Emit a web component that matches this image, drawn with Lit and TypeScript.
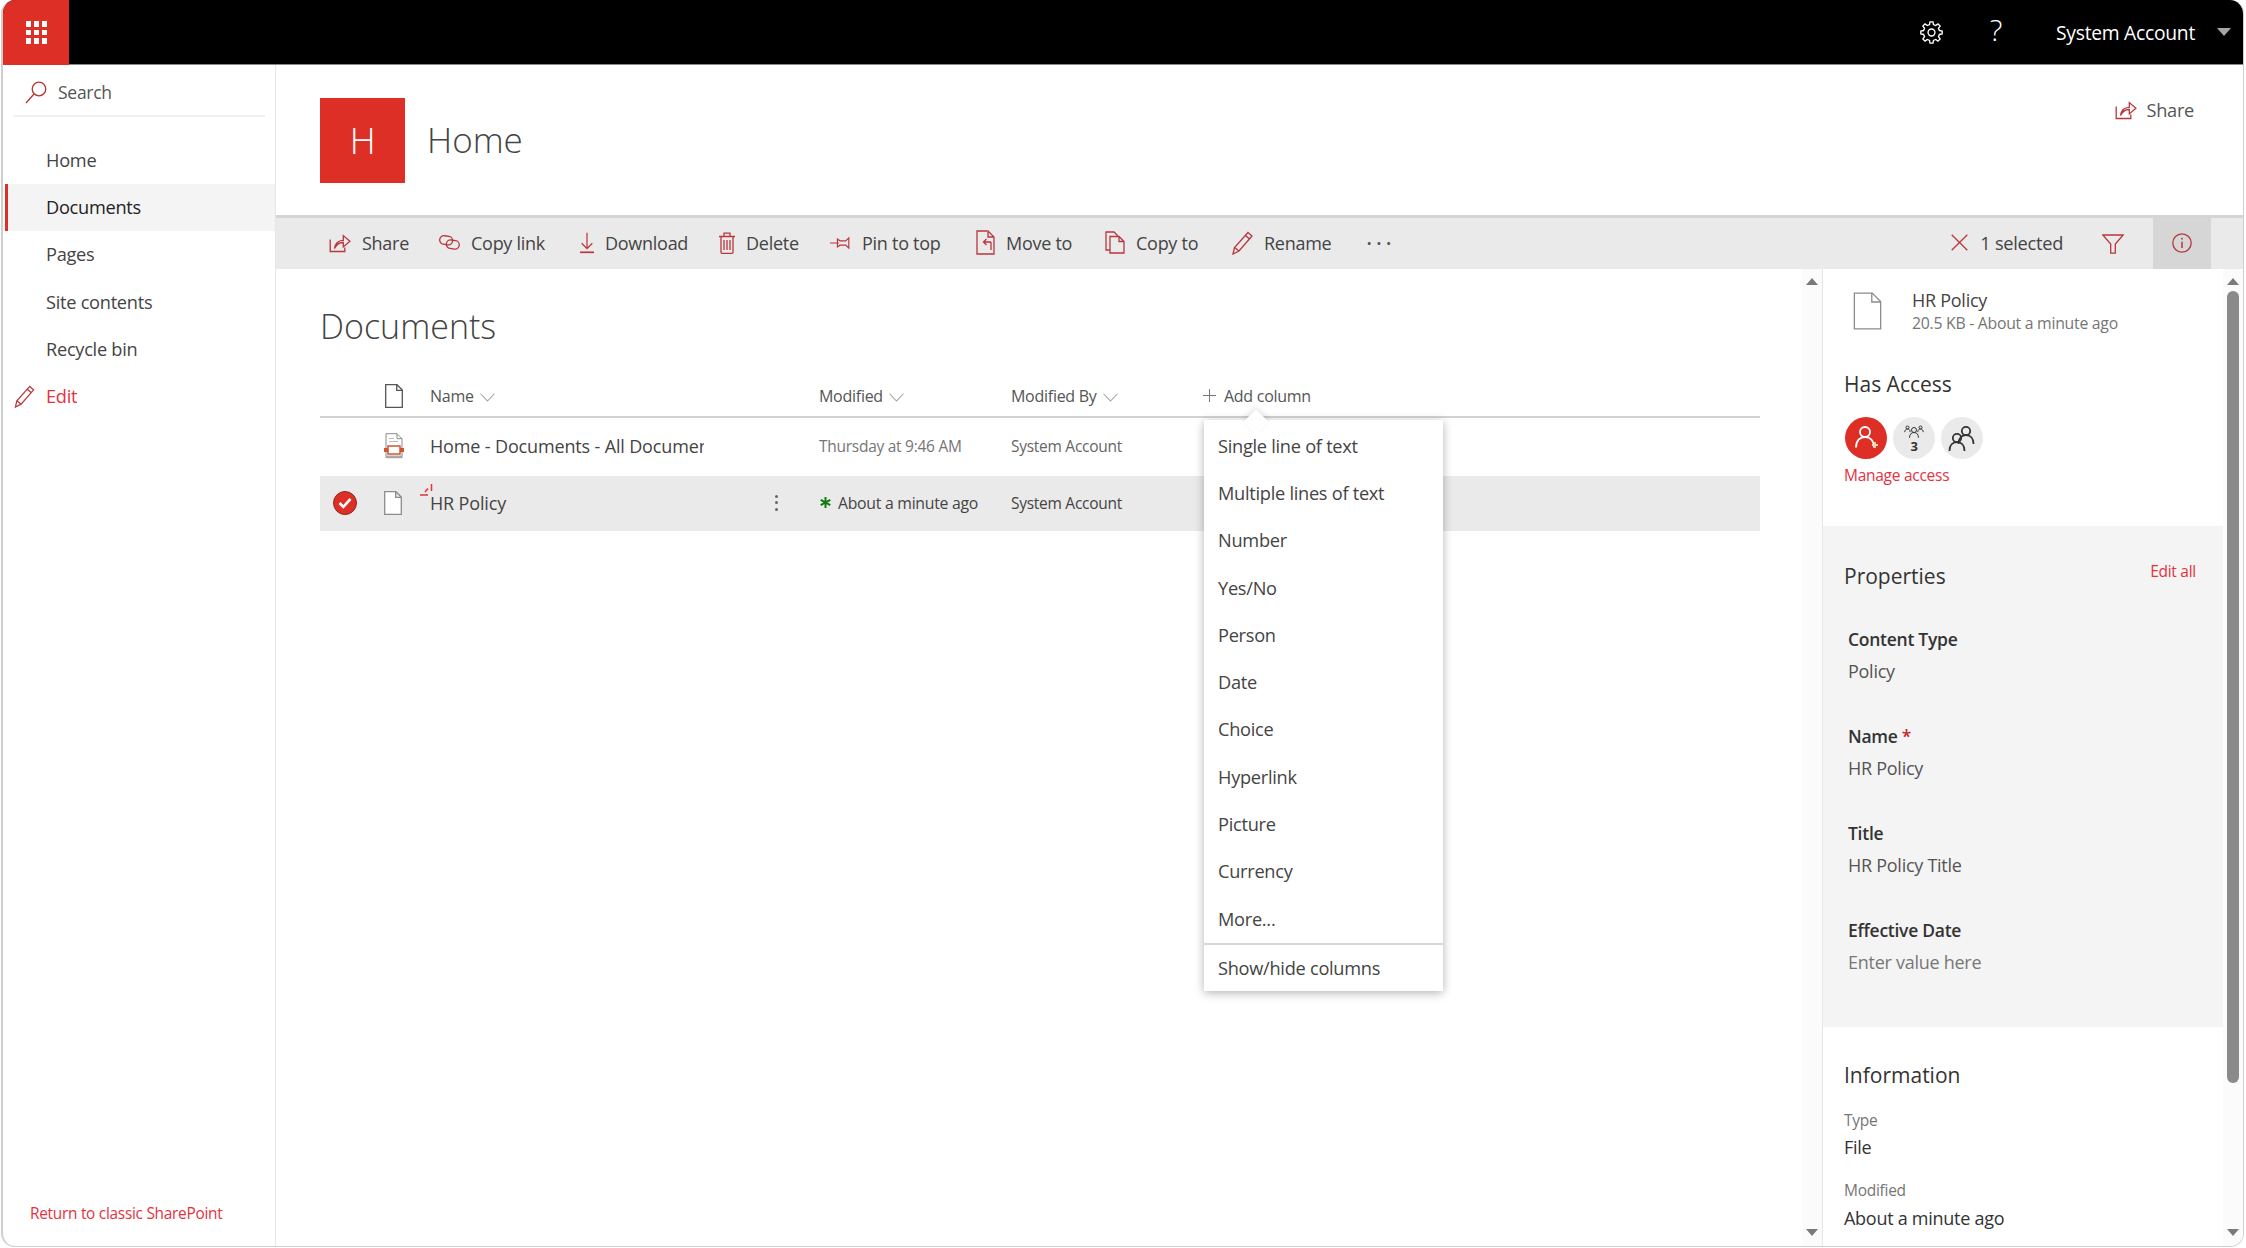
import { LitElement, html, css, svg } from "lit";
import { customElement } from "lit/decorators.js";

const i = (w: number, h: number, vb: string, body: any, cls = "ico") =>
  html`<svg class=${cls} width=${w} height=${h} viewBox=${vb} fill="none" stroke="currentColor" stroke-width="1.3">${body}</svg>`;

const shareIcon = () =>
  i(22, 20, "0 0 22 20", svg`<path d="M1.2 6.5v12h14.6v-4"/><path d="M5.5 15.5c.6-5 4-8 8.8-8.2V2.6l6.6 5.7-6.6 5.6v-4.4c-3.700-.1-6.800 1.700-8.800 6z"/>`);
const linkIcon = () =>
  i(21, 15, "0 0 21 15", svg`<rect x=".7" y="1" width="13" height="8.500" rx="4.250" transform="rotate(8 7 5)"/><rect x="7.300" y="5.300" width="13" height="8.500" rx="4.250" transform="rotate(8 14 9.500)"/>`);
const downIcon = () =>
  i(14, 23, "0 0 15 23", svg`<path d="M7.500 1v17M1.800 12.300l5.700 5.800 5.700-5.800"/><path d="M0 22h15" stroke-width="1.800"/>`);
const trashIcon = () =>
  i(16, 22, "0 0 16 22", svg`<path d="M2 4.500h12v15.800a1 1 0 0 1-1 1H3a1 1 0 0 1-1-1zM0 4.500h16M5 4.500V1.200h6v3.300M5 8v10M8 8v10M11 8v10"/>`);
const pinIcon = () =>
  i(21, 14, "0 0 24 16", svg`<path d="M0 8h10M8.500 3.500l3 2h6.500l3.500-3.500v12L18 10.500h-6.500l-3 2z"/>`);
const moveIcon = () =>
  i(19, 25, "0 0 19 25", svg`<path d="M11 1H1v23h17V7l-6-6v6h6"/><path d="M15 12H7.500M10.500 9l-3 3 3 3M15 12v8"/>`);
const copyIcon = () =>
  i(20, 23, "0 0 20 23", svg`<path d="M5 19H1V1h8l4 4"/><path d="M5 5.500h9l5 5V22H5zM14 5.500v5h5"/>`);
const pencilIcon = (w = 21, h = 24) =>
  i(w, h, "0 0 21 24", svg`<path d="M16 1.500l4 3.500L7 20l-6 3 1.500-6.500zM13.500 4.500l4 3.500M2.500 16.500L7 20"/>`);
const closeIcon = () => i(17, 17, "0 0 17 17", svg`<path d="M.7.700l15.600 15.600M16.300.700L.7 16.300"/>`);
const filterIcon = () => i(22, 20, "0 0 22 20", svg`<path d="M.8 1h20.400l-7.900 9v9.200h-4.600V10z"/>`);
const infoIcon = () =>
  i(20, 20, "0 0 20 20", svg`<circle cx="10" cy="10" r="9.200"/><path d="M10 8.700v6.300" stroke-width="1.500"/><circle cx="10" cy="5.700" r=".9" fill="currentColor" stroke="none"/>`);
const pageIcon = (w: number, h: number, cls = "page") =>
  i(w, h, "0 0 18 24", svg`<path d="M.7.700h11.300l5.300 5.300v17.300H.7zM11.700.9v5.400h5.400" fill="#fff" vector-effect="non-scaling-stroke"/>`, cls);
const chevron = () => i(15, 9, "0 0 14 8", svg`<path d="M.5.500L7 7.300 13.500.500" stroke-width="1"/>`, "chev");
const searchIcon = () =>
  i(22, 23, "0 0 22 23", svg`<circle cx="14" cy="8" r="6.800"/><path d="M9 13L1 22"/>`);
const gear = () => {
  const pts: string[] = [];
  const n = 8;
  for (let k = 0; k < n; k++) {
    const a = (k / n) * Math.PI * 2;
    const s = Math.PI / n;
    const P = (r: number, t: number) => `${(11 + r * Math.cos(t)).toFixed(2)} ${(11 + r * Math.sin(t)).toFixed(2)}`;
    pts.push(`${k ? "L" : "M"}${P(7.800, a - s * 0.62)}L${P(10.300, a - s * 0.36)}L${P(10.300, a + s * 0.36)}L${P(7.800, a + s * 0.62)}`);
  }
  return html`<svg class="gear" width="23" height="23" viewBox="0 0 22 22" fill="none" stroke="#fff" stroke-width="1.300"><path d="${pts.join("") + "Z"}"/><circle cx="11" cy="11" r="3.300"/></svg>`;
};
const person = (cx: number, cy: number, r: number) =>
  svg`<circle cx=${cx} cy=${cy} r=${r}/><path d="M${cx - r * 1.8} ${cy + r * 3.1}c0-${r * 1.4} ${r * .8}-${r * 2.1} ${r * 1.8}-${r * 2.1}s${r * 1.8} ${r * .7} ${r * 1.8} ${r * 2.1}"/>`;

const NAV = ["Home", "Documents", "Pages", "Site contents", "Recycle bin"];
const MENU = ["Single line of text", "Multiple lines of text", "Number", "Yes/No", "Person", "Date", "Choice", "Hyperlink", "Picture", "Currency", "More..."];
const CMDS: [() => any, string][] = [
  [shareIcon, "Share"], [linkIcon, "Copy link"], [downIcon, "Download"], [trashIcon, "Delete"],
  [pinIcon, "Pin to top"], [moveIcon, "Move to"], [copyIcon, "Copy to"], [pencilIcon, "Rename"],
];
const PROPS: [any, string, boolean][] = [
  ["Content Type", "Policy", false],
  [html`Name <span class="req">*</span>`, "HR Policy", false],
  ["Title", "HR Policy Title", false],
  ["Effective Date", "Enter value here", true],
];

@customElement("app-root")
export class AppRoot extends LitElement {
  static styles = css`
    :host { display: block; width: 2246px; height: 1248px; box-sizing: border-box; padding: 0 2px 1px 1px; background: #fff;
      font-family: "Open Sans", "Liberation Sans", sans-serif; font-size: 18.200px; letter-spacing: -.27px; color: #444; }
    * { box-sizing: border-box; }
    svg { display: block; flex: none; }
    .frame { height: 100%; border: solid #cfcfcf; border-width: 0 1px 1px 2px; border-radius: 14px; overflow: hidden; display: grid; grid-template-rows: 65px 1fr; background: #fff; }
    .top { background: #000; display: flex; align-items: center; color: #fff; border-bottom: 1px solid #8a8a8a; }
    .waffle { width: 66px; height: 65px; background: #dd2f26; display: grid; grid-template-columns: repeat(3, 5px); grid-auto-rows: 5.500px; gap: 3px 3px; justify-content: center; align-content: center; flex: none; margin-top: 1px; }
    .waffle i { background: #fff; display: block; }
    .top-right { margin-left: auto; display: flex; align-items: center; }
    .gear { margin-right: 43px; }
    .help { font-size: 30px; font-weight: 300; width: 20px; margin-right: 50px; line-height: 40px; text-align: center; margin-top: -4px; }
    .acct { font-size: 19.300px; }
    .caret { width: 0; height: 0; border: solid transparent; border-width: 8px 7.500px 0; border-top-color: #a6a6a6; margin: 0 12px 0 22px; }
    .body { display: grid; grid-template-columns: 273px 1fr; min-height: 0; }
    .nav { border-right: 1px solid #e6e6e6; display: flex; flex-direction: column; }
    .search { height: 52px; margin: 0 10px 0 11px; border-bottom: 2px solid #f0f0f0; display: flex; align-items: center; gap: 11px; padding: 4px 0 0 11px; color: #555; font-size: 17.500px; }
    .search .ico { color: #b3333a; }
    .nav-list { margin-top: 19.500px; }
    .nav-item { height: 47.300px; display: flex; align-items: center; padding: 0 0 1px 43px; }
    .nav-item.sel { background: #f4f4f4; color: #222; margin-left: 2px; padding-left: 38px; border-left: 3px solid #dd2f26; }
    .nav-item.edit { color: #e5323e; padding-left: 11px; gap: 11px; }
    .nav-item.edit .ico { color: #b8363c; }
    .classic { margin-top: auto; padding: 0 0 20px 27px; color: #e5323e; font-size: 15.400px; line-height: 24px; }
    .right { display: flex; flex-direction: column; min-height: 0; }
    .site { height: 150px; display: flex; align-items: flex-start; padding: 33px 0 0 44px; }
    .logo { width: 85px; height: 85px; background: #dd2f26; color: #fff; font-size: 36px; font-weight: 300; display: flex; align-items: center; justify-content: center; flex: none; }
    .site-title { margin-left: 22px; font-size: 35px; font-weight: 300; color: #444; line-height: 85px; letter-spacing: 0; margin-top: -1px; }
    .site-share { margin-left: auto; margin-right: 49px; display: flex; align-items: center; gap: 9px; line-height: 24px; color: #555; }
    .ico { color: #b8363c; }
    .cmd { height: 54px; background: #eaeaea; border-top: 3px solid #d4d4d4; display: flex; align-items: center; padding-left: 53px; }
    .cmds { display: grid; grid-template-columns: 110px 141px 139px 111px 146px 129px 127px 137px 60px; align-items: center; padding-bottom: 2px; font-size: 18px; }
    .c { display: flex; align-items: center; gap: 11px; color: #444; white-space: nowrap; }
    .dots { font-size: 24px; letter-spacing: 3.500px; color: #555; line-height: 20px; height: 28px; margin-left: -3px; }
    .cmd-right { margin-left: auto; display: flex; align-items: stretch; height: 100%; }
    .sel-count { display: flex; align-items: center; gap: 12px; color: #444; margin-right: 39px; padding-bottom: 2px; }
    .filter { display: flex; align-items: center; margin-right: 29px; }
    .info { width: 58px; background: #d6d6d6; display: flex; align-items: center; justify-content: center; margin-right: 32px; padding-bottom: 2px; }
    .content { flex: 1; min-height: 0; display: grid; grid-template-columns: 1526px 20px 401px 20px; }
    .main { padding: 0 42px 0 44px; position: relative; }
    .doc-title { font-size: 34px; font-weight: 300; line-height: 50px; margin-top: 32px; color: #444; letter-spacing: 0; }
    .row { display: grid; grid-template-columns: 65px 45px 274px 115px 192px 192px 1fr; align-items: center; }
    .row > .rowicon, .r2 > .page { margin-left: -1px; }
    .head { height: 49px; margin-top: 18px; border-bottom: 2px solid #d2d2d2; font-size: 16px; color: #555; padding-top: 6px; }
    .head .h { display: flex; align-items: center; gap: 6px; }
    .chev { color: #a0a0a0; margin-top: 3px; }
    .head .page { color: #555; }
    .page { color: #8c8c8c; }
    .name-h { grid-column: 3 / 5; }
    .add { color: #555; gap: 8px !important; }
    .plus { width: 13px; height: 13px; color: #777; }
    .r1 { height: 58px; padding-bottom: 2px; }
    .r2 { height: 55px; background: #eaeaea; padding-bottom: 2px; }
    .name { overflow: hidden; white-space: nowrap; font-size: 18px; color: #444; letter-spacing: -.15px; }
    .mod { font-size: 15.500px; color: #767676; white-space: nowrap; }
    .r2 .mod { color: #444; display: flex; align-items: center; gap: 7px; font-size: 15.800px; padding-left: 1px; }
    .by { font-size: 15.500px; color: #666; white-space: nowrap; }
    .r2 .by { color: #444; }
    .star { color: #107c10; width: 11px; height: 11px; }
    .chk { margin-left: 13px; width: 24px; height: 24px; border-radius: 50%; background: #dd2f26; border: 1px solid #8c2a26; display: flex; align-items: center; justify-content: center; }
    .namewrap { position: relative; overflow: visible; }
    .spark { position: absolute; left: -10px; top: -7px; color: #e5323e; }
    .kebab { margin-left: 71px; display: grid; gap: 3.500px; width: 3px; }
    .kebab i { width: 3px; height: 3px; background: #666; border-radius: 50%; display: block; }
    .menu { position: absolute; left: 928px; top: 151px; width: 239px; background: #fff; box-shadow: 0 2px 9px rgba(0,0,0,.3); z-index: 2; padding-top: 2px; color: #444; }
    .menu::before { content: ""; position: absolute; left: 43px; top: -7px; width: 18px; height: 18px; background: #fff; transform: rotate(45deg); box-shadow: -2px -2px 5px rgba(0,0,0,.1); }
    .menu > div { position: relative; height: 47.300px; display: flex; align-items: center; padding-left: 14px; white-space: nowrap; }
    .menu .sep { border-top: 2px solid #d8d8d8; height: 48px; margin-top: 1px; }
    .sb { background: #fbfbfb; position: relative; display: flex; flex-direction: column; align-items: center; padding: 9px 0 10px; }
    .sb .up { width: 0; height: 0; border: solid transparent; border-width: 0 6px 7px; border-bottom-color: #7a7a7a; }
    .sb .dn { width: 0; height: 0; border: solid transparent; border-width: 7px 6px 0; border-top-color: #7a7a7a; margin-top: auto; }
    .thumb { width: 12px; height: 792px; background: #8a8a8a; border-radius: 6px; margin-top: 6px; }
    .panel { border-left: 1px solid #e6e6e6; overflow: hidden; color: #333; background: #fff; }
    .ptop { display: flex; padding: 19px 0 0 30px; height: 65px; }
    .ptop .page { margin: 4px 30px 0 0; }
    .pt { line-height: 24px; font-size: 18px; color: #444; }
    .ps { line-height: 22px; font-size: 15.800px; color: #767676; }
    .h2 { font-size: 21px; line-height: 30px; color: #333; letter-spacing: 0; }
    .acc { padding-left: 21px; margin-top: 35px; }
    .circles { display: flex; gap: 6px; margin-top: 18px; padding-left: 1px; }
    .circ { width: 42px; height: 42px; border-radius: 50%; background: #eaeaea; display: flex; flex-direction: column; align-items: center; justify-content: center; color: #333; }
    .circ.red { background: #dd2f26; color: #fff; }
    .n3 { font-size: 13px; font-weight: 700; line-height: 12px; }
    .manage { color: #e5323e; font-size: 15.500px; line-height: 22px; margin-top: 5px; }
    .props { background: #f4f4f4; margin-top: 40px; height: 501px; padding: 35px 0 0 21px; }
    .ph { display: flex; justify-content: space-between; align-items: flex-start; padding-right: 27px; margin-bottom: 36px; }
    .editall { color: #e5323e; font-size: 15.500px; line-height: 20px; }
    .prop { padding-left: 4px; margin-bottom: 41px; }
    .pl { font-weight: 600; font-size: 17.500px; line-height: 24px; color: #333; }
    .pv { margin-top: 8px; font-size: 18px; line-height: 24px; color: #555; }
    .pv.ph2 { color: #777; }
    .req { color: #c8232a; }
    .infos { padding: 33px 0 0 21px; }
    .il { font-size: 15.500px; line-height: 22px; color: #767676; margin-top: 19px; }
    .il + .iv + .il { margin-top: 20px; }
    .iv { font-size: 18px; line-height: 24px; color: #333; margin-top: 4px; }
    .iv:last-child { margin-top: 5px; }
  `;

  render() {
    return html`<div class="frame">
      <div class="top">
        <div class="waffle">${Array.from({ length: 9 }, () => html`<i></i>`)}</div>
        <div class="top-right">
          ${gear()}
          <div class="help">?</div>
          <div class="acct">System Account</div>
          <div class="caret"></div>
        </div>
      </div>
      <div class="body">
        <div class="nav">
          <div class="search">${searchIcon()}<span>Search</span></div>
          <div class="nav-list">
            ${NAV.map((n) => html`<div class="nav-item ${n === "Documents" ? "sel" : ""}">${n}</div>`)}
            <div class="nav-item edit">${pencilIcon(21, 23)}<span>Edit</span></div>
          </div>
          <div class="classic">Return to classic SharePoint</div>
        </div>
        <div class="right">
          <div class="site">
            <div class="logo">H</div>
            <div class="site-title">Home</div>
            <div class="site-share">${shareIcon()}<span>Share</span></div>
          </div>
          <div class="cmd">
            <div class="cmds">
              ${CMDS.map(([ic, t]) => html`<div class="c">${ic()}<span>${t}</span></div>`)}
              <div class="c dots">···</div>
            </div>
            <div class="cmd-right">
              <div class="sel-count">${closeIcon()}<span>1 selected</span></div>
              <div class="filter">${filterIcon()}</div>
              <div class="info">${infoIcon()}</div>
            </div>
          </div>
          <div class="content">
            <div class="main">
              <div class="doc-title">Documents</div>
              <div class="row head">
                <span></span>
                ${pageIcon(18, 24)}
                <div class="h name-h"><span>Name</span>${chevron()}</div>
                <div class="h"><span>Modified</span>${chevron()}</div>
                <div class="h"><span>Modified By</span>${chevron()}</div>
                <div class="h add"><svg class="plus" viewBox="0 0 13 13" stroke="currentColor" fill="none"><path d="M6.500 0v13M0 6.500h13"/></svg><span>Add column</span></div>
              </div>
              <div class="row r1">
                <span></span>
                <svg class="rowicon" width="20" height="26" viewBox="0 0 20 26" fill="none"><path d="M2 .7h11l5 5v19H2z" fill="#fff" stroke="#8c8c8c"/><path d="M13 .7v5h5" stroke="#8c8c8c"/><path d="M5 5.500h5M5 8.500h9" stroke="#bbb"/><rect x="4" y="13" width="12" height="8" fill="#fff" stroke="#d0552f" stroke-width="1.500"/><rect x="0" y="15" width="4" height="4" fill="#d0552f"/><rect x="16" y="15" width="4" height="4" fill="#d0552f"/><path d="M2 22.500h16v2H2z" fill="#aaa"/></svg>
                <div class="name">Home - Documents - All Documents</div>
                <span></span>
                <div class="mod">Thursday at 9:46 AM</div>
                <div class="by">System Account</div>
              </div>
              <div class="row r2">
                <div class="chk"><svg width="14" height="12" viewBox="0 0 14 12" fill="none" stroke="#fff" stroke-width="2.600"><path d="M1.500 6l3.800 3.800L12.500 2"/></svg></div>
                ${pageIcon(18, 24)}
                <div class="name namewrap">
                  <svg class="spark" width="13" height="12" viewBox="0 0 13 12" fill="none" stroke="currentColor" stroke-width="1.500"><path d="M0 11h8M5 8l3-3.500M11.500 0v7"/></svg>
                  HR Policy
                </div>
                <div class="kebab"><i></i><i></i><i></i></div>
                <div class="mod"><svg class="star" viewBox="0 0 11 11" fill="none" stroke="currentColor" stroke-width="2"><path d="M5.500 0v11M.7 2.800l9.600 5.400M10.300 2.800L.7 8.200"/></svg><span>About a minute ago</span></div>
                <div class="by">System Account</div>
              </div>
              <div class="menu">
                ${MENU.map((m) => html`<div>${m}</div>`)}
                <div class="sep">Show/hide columns</div>
              </div>
            </div>
            <div class="sb"><div class="up"></div><div class="dn"></div></div>
            <div class="panel">
              <div class="ptop">
                ${pageIcon(29, 38)}
                <div><div class="pt">HR Policy</div><div class="ps">20.5 KB - About a minute ago</div></div>
              </div>
              <div class="acc">
                <div class="h2">Has Access</div>
                <div class="circles">
                  <div class="circ red"><svg width="28" height="28" viewBox="0 0 28 28" fill="none" stroke="currentColor" stroke-width="1.800">${person(13, 8, 5)}<path d="M20 21h6M23 18v6" stroke="#ffd9b0"/></svg></div>
                  <div class="circ"><svg width="20" height="15" viewBox="0 0 20 15" fill="none" stroke="currentColor" stroke-width="1">${person(10, 5, 2.500)}${person(3.500, 2.500, 1.500)}${person(16.500, 2.500, 1.500)}</svg><div class="n3">3</div></div>
                  <div class="circ"><svg width="28" height="28" viewBox="0 0 28 28" fill="none" stroke="currentColor" stroke-width="1.800">${person(18, 7, 4.200)}${person(9, 14, 4.200)}</svg></div>
                </div>
                <div class="manage">Manage access</div>
              </div>
              <div class="props">
                <div class="ph"><div class="h2">Properties</div><div class="editall">Edit all</div></div>
                ${PROPS.map(([l, v, p]) => html`<div class="prop"><div class="pl">${l}</div><div class="pv ${p ? "ph2" : ""}">${v}</div></div>`)}
              </div>
              <div class="infos">
                <div class="h2">Information</div>
                <div class="il">Type</div><div class="iv">File</div>
                <div class="il">Modified</div><div class="iv">About a minute ago</div>
              </div>
            </div>
            <div class="sb"><div class="up"></div><div class="thumb"></div><div class="dn"></div></div>
          </div>
        </div>
      </div>
    </div>`;
  }
}
